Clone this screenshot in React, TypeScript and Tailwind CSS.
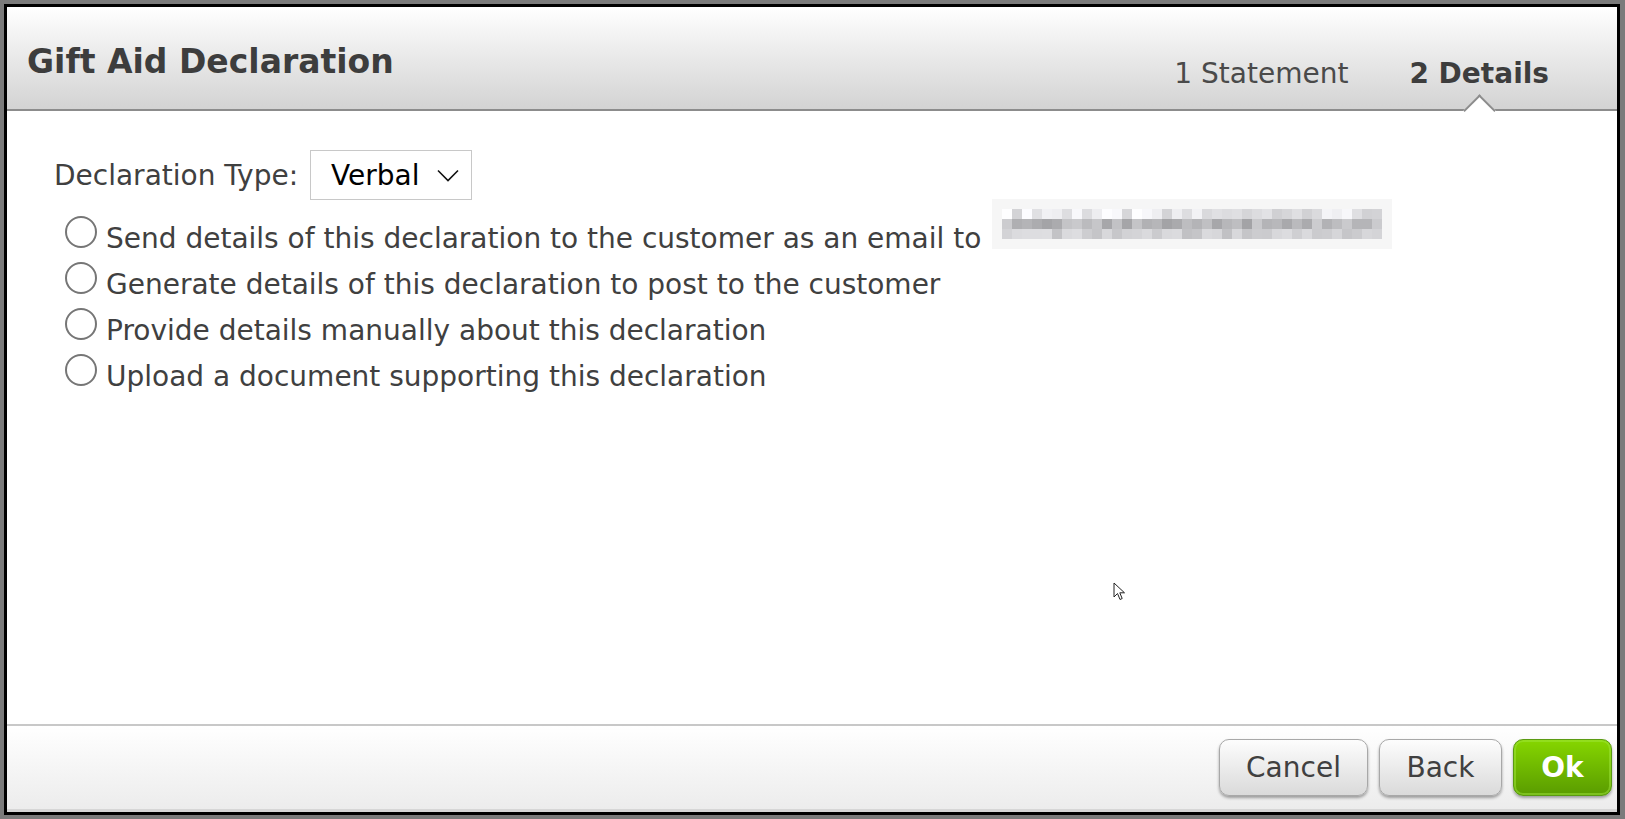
import React from 'react';

const OPTIONS = [
  'Send details of this declaration to the customer as an email to',
  'Generate details of this declaration to post to the customer',
  'Provide details manually about this declaration',
  'Upload a document supporting this declaration',
];

// pixelated (redacted) email address
const ROW_BASE = [244, 205, 222];
const ROW_SPREAD = [36, 42, 30];
function blockColour(row: number, col: number) {
  const n = Math.abs(Math.sin(row * 91.7 + col * 12.9898) * 43758.5453) % 1;
  const v = Math.round(ROW_BASE[row] - n * ROW_SPREAD[row] + (row === 0 && n < 0.5 ? 10 : 0));
  const c = Math.min(255, v);
  return `rgb(${c},${c},${Math.min(255, c + 3)})`;
}

function Redacted() {
  return (
    <div className="-mt-[17px] ml-[11px] flex h-[50px] w-[400px] flex-col bg-[#f6f6f6] pl-[10px] pt-[10px]">
      {[0, 1, 2].map((r) => (
        <div key={r} className="flex h-[10px]">
          {Array.from({ length: 38 }).map((_, c) => (
            <div key={c} className="h-[10px] w-[10px]" style={{ background: blockColour(r, c) }} />
          ))}
        </div>
      ))}
    </div>
  );
}

function Radio() {
  return <div className="h-[32px] w-[32px] shrink-0 rounded-full border-2 border-[#767676] bg-white" />;
}

export default function App() {
  return (
    <div
      className="relative h-[819px] w-[1625px] bg-[#7b7b7b] p-1 text-[#404040]"
      style={{ fontFamily: '"DejaVu Sans", Verdana, sans-serif' }}
    >
      <div className="flex h-[811px] w-[1616px] flex-col border-[3px] border-black bg-white">
        {/* Header */}
        <div className="relative flex h-[104px] shrink-0 items-start justify-between border-b-2 border-[#8c8c8c] bg-gradient-to-b from-[#ffffff] to-[#d3d3d3] pl-[20px] pr-[68px]">
          <h1 className="mt-[35px] text-[33px] font-bold leading-[40px] text-[#3d3d3d]">Gift Aid Declaration</h1>
          <div className="mt-[49px] flex gap-[61px] text-[28px] leading-[35px]">
            <span className="text-[#4a4a4a]">1 Statement</span>
            <span className="font-bold text-[#3d3d3d]">2 Details</span>
          </div>
          <div className="absolute -bottom-[13px] left-[1461px] z-10 h-[23px] w-[23px] rotate-45 border-l-2 border-t-2 border-[#8c8c8c] bg-white" />
        </div>

        {/* Body */}
        <div className="flex-1 pl-[47px] pt-[39px] text-[28px]">
          <div className="flex items-center">
            <span className="leading-[35px]">Declaration Type:</span>
            <div className="ml-[12px] flex h-[50px] w-[162px] items-center justify-between border border-[#c8c8c8] bg-white pl-[20px] pr-[12px]">
              <span className="leading-[35px] text-black">Verbal</span>
              <svg width="22" height="13" viewBox="0 0 22 13" fill="none">
                <path d="M1 1.5 L11 11.5 L21 1.5" stroke="#111" strokeWidth="1.6" />
              </svg>
            </div>
          </div>
          <div className="ml-[11px] mt-[16px] flex flex-col">
            {OPTIONS.map((label, i) => (
              <div key={label} className="flex h-[46px] items-start">
                <Radio />
                <span className="ml-[9px] whitespace-nowrap leading-[46px]">{label}</span>
                {i === 0 && <Redacted />}
              </div>
            ))}
          </div>
        </div>

        {/* Footer */}
        <div className="flex h-[88px] shrink-0 items-start justify-end gap-[11px] border-b-[3px] border-t-2 border-b-[#d6d6d6] border-t-[#c8c8c8] bg-gradient-to-b from-[#ffffff] to-[#ececec] pr-[5px] pt-[13px] text-[28px]">
          <button className="h-[57px] w-[149px] rounded-[10px] border border-[#a8a8a8] bg-gradient-to-b from-[#fdfdfd] to-[#dadada] text-[#404040] shadow-[0_2px_3px_rgba(0,0,0,0.35)]">
            Cancel
          </button>
          <button className="h-[57px] w-[123px] rounded-[10px] border border-[#a8a8a8] bg-gradient-to-b from-[#fdfdfd] to-[#dadada] text-[#404040] shadow-[0_2px_3px_rgba(0,0,0,0.35)]">
            Back
          </button>
          <button className="h-[57px] w-[99px] rounded-[10px] border border-[#5a9a12] bg-gradient-to-b from-[#86d600] to-[#5a9c00] font-bold text-white shadow-[0_2px_3px_rgba(0,0,0,0.35),inset_0_0_0_2px_rgba(160,230,60,0.5)]">
            Ok
          </button>
        </div>
      </div>

      {/* mouse pointer */}
      <svg className="absolute left-[1113px] top-[582px]" width="14" height="20" viewBox="0 0 14 20">
        <path d="M1 1 L1 15 L4.5 11.5 L7 17.5 L9.2 16.5 L6.8 10.8 L11.5 10.8 Z" fill="#fff" stroke="#222" strokeWidth="1" strokeLinejoin="round" />
      </svg>
    </div>
  );
}
